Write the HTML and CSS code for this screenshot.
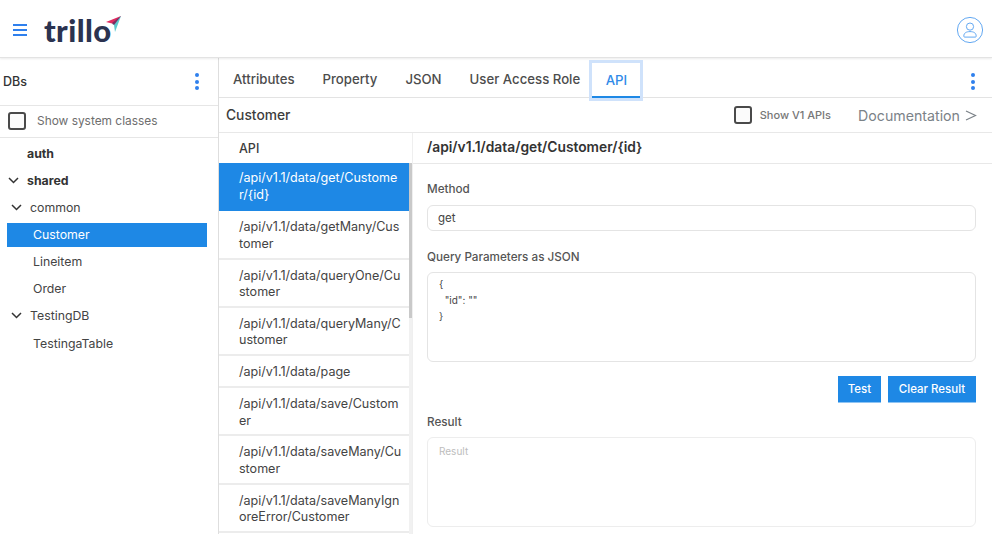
FILE: index.html
```html
<!DOCTYPE html>
<html lang="en">
<head>
<meta charset="utf-8">
<title>Trillo</title>
<link rel="stylesheet" href="styles.css">
</head>
<body>
<header class="topbar">
  <svg class="menu-icon" width="16" height="14" viewBox="0 0 16 14"><path d="M1 2h14M1 7h14M1 12h14" stroke="#2f80ed" stroke-width="2" fill="none"/></svg>
  <div class="logo"><span class="logo-text">trillo</span>
    <svg class="logo-mark" width="16" height="18" viewBox="0 0 16 18"><path d="M0 6 15 0 8 8Z" fill="#e0295f"/><path d="M6 8 15 0 9 16 8 9Z" fill="#5cc8cc"/><path d="M6 7 15 0 8 9Z" fill="#7c2a5f"/></svg>
  </div>
  <svg class="user-icon" width="28" height="28" viewBox="0 0 28 28" fill="none" stroke="#64a9f2" stroke-width="1"><circle cx="14" cy="14" r="12.600"/><circle cx="14" cy="10.600" r="3.600"/><path d="M7.800 20.200c0-3.200 2.400-4.600 6.200-4.600s6.200 1.400 6.200 4.600c0 .6-.3.9-.9.9H8.700c-.6 0-.9-.3-.9-.9Z"/></svg>
</header>
<div class="app">
  <aside class="sidebar">
    <div class="side-head"><span>DBs</span><span class="kebab"><i></i><i></i><i></i></span></div>
    <label class="side-check"><span class="box"></span><span>Show system classes</span></label>
    <ul class="tree">
      <li class="node bold indent-a">auth</li>
      <li class="node bold"><svg class="chev" width="11" height="7" viewBox="0 0 11 7"><path d="M1 1l4.500 4.500L10 1" fill="none" stroke="#333" stroke-width="1.500"/></svg>shared</li>
      <li class="node lvl1"><svg class="chev" width="11" height="7" viewBox="0 0 11 7"><path d="M1 1l4.500 4.500L10 1" fill="none" stroke="#333" stroke-width="1.500"/></svg>common</li>
      <li class="node leaf selected">Customer</li>
      <li class="node leaf">Lineitem</li>
      <li class="node leaf">Order</li>
      <li class="node lvl1"><svg class="chev" width="11" height="7" viewBox="0 0 11 7"><path d="M1 1l4.500 4.500L10 1" fill="none" stroke="#333" stroke-width="1.500"/></svg>TestingDB</li>
      <li class="node leaf last">TestingaTable</li>
    </ul>
  </aside>
  <main class="content">
    <nav class="tabs">
      <a class="tab">Attributes</a>
      <a class="tab">Property</a>
      <a class="tab">JSON</a>
      <a class="tab">User Access Role</a>
      <a class="tab active">API</a>
      <span class="kebab tabs-kebab"><i></i><i></i><i></i></span>
    </nav>
    <div class="titlebar">
      <span class="title">Customer</span>
      <label class="v1"><span class="box"></span><span>Show V1 APIs</span></label>
      <a class="doc">Documentation<svg width="12" height="11" viewBox="0 0 12 11"><path d="M1 1l9.500 4.500L1 10" fill="none" stroke="#7b8288" stroke-width="1.200"/></svg></a>
    </div>
    <div class="split">
      <section class="api-list">
        <div class="api-rows">
          <div class="api-head">API</div>
          <div class="api-row selected">/api/v1.1/data/get/Custome<br>r/{id}</div>
          <div class="api-row">/api/v1.1/data/getMany/Cus<br>tomer</div>
          <div class="api-row">/api/v1.1/data/queryOne/Cu<br>stomer</div>
          <div class="api-row">/api/v1.1/data/queryMany/C<br>ustomer</div>
          <div class="api-row">/api/v1.1/data/page</div>
          <div class="api-row">/api/v1.1/data/save/Custom<br>er</div>
          <div class="api-row">/api/v1.1/data/saveMany/Cu<br>stomer</div>
          <div class="api-row">/api/v1.1/data/saveManyIgn<br>oreError/Customer</div>
        </div>
        <div class="scrollbar"><div class="thumb"></div></div>
      </section>
      <section class="detail">
        <h2 class="detail-title">/api/v1.1/data/get/Customer/{id}</h2>
        <div class="form">
          <div class="field-label first">Method</div>
          <div class="input">get</div>
          <div class="field-label second">Query Parameters as JSON</div>
          <div class="textarea code">{<br>&nbsp;&nbsp;"id": ""<br>}</div>
          <div class="actions"><button class="btn btn-test">Test</button><button class="btn btn-clear">Clear Result</button></div>
          <div class="field-label third">Result</div>
          <div class="textarea result">Result</div>
        </div>
      </section>
    </div>
  </main>
</div>
</body>
</html>
```
FILE: styles.css
```css
* { box-sizing: border-box; }
html, body { margin: 0; height: 100%; overflow: hidden; }
body {
  width: 992px; height: 534px; background: #fff; color: #3a3a3a;
  font-family: "Inter", "Open Sans", sans-serif; font-size: 12px;
  display: flex; flex-direction: column;
}
.topbar {
  height: 58px; flex: none; display: flex; align-items: center; padding: 0 8px 0 12px;
  border-bottom: 1px solid #e3e3e3; box-shadow: 0 1px 2px rgba(0,0,0,.08); position: relative; z-index: 1;
}
.menu-icon { margin-top: 3px; }
.logo { display: flex; margin-left: 16px; position: relative; height: 40px; align-items: center; }
.logo-text { font-family: "Lato", sans-serif; font-weight: 900; font-size: 31px; color: #2b3350; letter-spacing: .4px; line-height: 40px; margin-top: 2px; }
.logo-mark { position: absolute; left: 62px; top: 7px; }
.user-icon { margin-left: auto; margin-top: 2px; }
.app { flex: 1; min-height: 0; display: flex; }
.sidebar { width: 219px; flex: none; border-right: 1px solid #dedede; }
.side-head { height: 48px; display: flex; align-items: center; justify-content: space-between; padding: 0 19px 0 3px; border-bottom: 1px solid #e6e6e6; font-size: 12.500px; font-weight: 500; color: #333; }
.kebab { display: inline-flex; flex-direction: column; gap: 2.500px; }
.kebab i { width: 4px; height: 4px; border-radius: 50%; background: #2f80ed; display: block; }
.side-check { height: 32px; display: flex; align-items: center; gap: 11px; padding-left: 8px; padding-bottom: 2px; border-bottom: 1px solid #e6e6e6; font-size: 11.900px; color: #6e6e6e; }
.box { width: 18px; height: 18px; border: 2px solid #4a4a4a; border-radius: 3px; background: #fbfbfb; flex: none; }
.tree { list-style: none; margin: 2px 0 0; padding: 0; }
.node { height: 27px; display: flex; align-items: center; font-size: 12.300px; color: #444; padding-left: 8px; }
.bold { font-weight: 700; color: #333; }
.indent-a { padding-left: 27px; }
.chev { margin-right: 8px; flex: none; }
.lvl1 { padding-left: 11px; }
.leaf { margin-left: 7px; width: 200px; padding-left: 26px; }
.node.selected { background: #1e88e5; color: #fff; height: 24px; margin-top: 2px; margin-bottom: 1px; padding-bottom: 1px; }
.node.last { margin-top: 1px; }
.content { flex: 1; min-width: 0; display: flex; flex-direction: column; }
.tabs { height: 40px; flex: none; display: flex; align-items: flex-start; border-bottom: 1px solid #e3e3e3; position: relative; }
.tab { height: 39px; font-size: 13.200px; font-weight: 500; color: #4c4c4c; display: flex; align-items: center; padding: 3px 14px 0; }
.tab.active { color: #2f8ae8; width: 48px; height: 35px; margin-top: 5px; margin-left: -2px; padding: 0 0 0 13.500px; border-bottom: 2px solid #1e88e5; outline: 3px solid #cfe2fb; position: relative; z-index: 1; }
.tabs-kebab { position: absolute; right: 17px; top: 15px; }
.titlebar { height: 35px; flex: none; display: flex; align-items: center; padding: 0 15px 0 7px; border-bottom: 1px solid #e8e8e8; }
.title { font-size: 13.800px; font-weight: 500; color: #3d3d3d; }
.v1 { margin-left: auto; display: flex; align-items: center; gap: 8px; font-size: 11px; font-weight: 500; color: #777; }
.doc { display: flex; align-items: center; gap: 5px; margin-left: 27px; font-size: 14.200px; color: #7b8288; }
.split { flex: 1; min-height: 0; display: flex; }
.api-list { width: 194px; flex: none; display: flex; overflow: hidden; border-right: 1px solid #efefef; }
.api-rows { width: 190px; flex: none; }
.api-head { height: 30px; display: flex; align-items: center; padding-left: 20px; font-size: 12.500px; font-weight: 500; color: #3c3c3c; }
.api-row { padding: 8px 0 0 20px; font-size: 12.550px; line-height: 16.500px; white-space: nowrap; color: #444; border-bottom: 2px solid #ececec; height: 48.300px; }
.api-row:nth-child(6) { height: 32px; }
.api-row.selected { background: #1e88e5; color: #fff; border-bottom: 0; padding-top: 7px; }
.scrollbar { width: 4px; background: #f1f1f1; margin-top: 30px; }
.thumb { height: 155px; background: #c9c9c9; }
.detail { flex: 1; min-width: 0; }
.detail-title { margin: 0; height: 31px; display: flex; align-items: center; padding: 0 0 2px 14px; font-size: 13.800px; font-weight: 600; color: #333; border-bottom: 1px solid #e8e8e8; }
.form { padding: 0 16px 0 14px; }
.field-label { font-size: 11.700px; font-weight: 500; color: #555; }
.first { margin-top: 18px; }
.input { height: 26px; margin-top: 9px; border: 1px solid #e4e4e4; border-radius: 6px; padding: 0 10px; display: flex; align-items: center; font-size: 11.500px; color: #444; }
.second { margin-top: 19px; }
.textarea { border: 1px solid #e4e4e4; border-radius: 6px; margin-top: 8px; padding: 3px 11px; font-size: 10px; line-height: 16px; color: #444; }
.code { height: 90px; }
.actions { display: flex; justify-content: flex-end; gap: 7px; margin-top: 14px; }
.btn { height: 27px; border: 0; background: #1e88e5; color: #fff; font: 500 11.500px "Inter", sans-serif; border-bottom: 1px solid #8fc4f3; }
.btn-test { width: 43px; padding: 0; }
.btn-clear { width: 88px; padding: 0; }
.third { margin-top: 12px; }
.result { height: 90px; margin-top: 8px; padding-top: 5px; color: #bdbdbd; border-color: #ededed; }
```
